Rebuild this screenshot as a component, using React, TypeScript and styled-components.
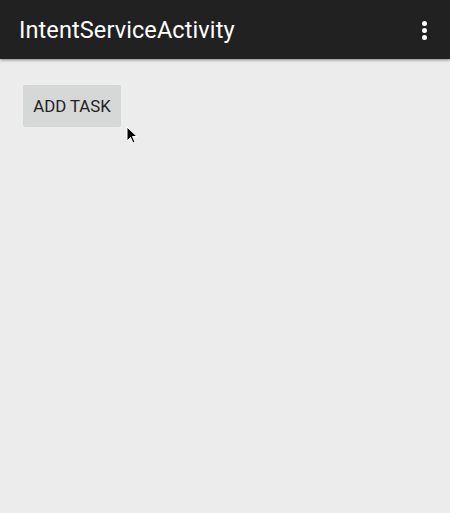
import React from "react";
import styled, { createGlobalStyle } from "styled-components";

const Global = createGlobalStyle`
  html, body {
    margin: 0;
    padding: 0;
    background: #ececec;
  }
  body {
    font-family: Roboto, "Liberation Sans", sans-serif;
  }
`;

const Screen = styled.div`
  position: relative;
  width: 450px;
  height: 513px;
  background: #ececec;
  overflow: hidden;
`;

const Toolbar = styled.div`
  display: flex;
  align-items: center;
  justify-content: space-between;
  height: 59px;
  padding: 0 23px 0 19px;
  background: #212121;
  box-shadow: 0 1px 3px rgba(0, 0, 0, 0.45);
  position: relative;
  z-index: 1;
`;

const Title = styled.h1`
  margin: 0;
  font-size: 23.5px;
  font-weight: 400;
  color: #ffffff;
  letter-spacing: 0.1px;
`;

const Overflow = styled.div`
  display: flex;
  flex-direction: column;
  gap: 2px;
  margin-top: 1px;
`;

const Dot = styled.span`
  width: 5px;
  height: 5px;
  border-radius: 50%;
  background: #ffffff;
`;

const Content = styled.div`
  padding: 26px 23px;
`;

const Button = styled.button`
  position: relative;
  height: 42px;
  width: 98px;
  padding: 0;
  border: none;
  border-radius: 2px;
  background: #d6d7d7;
  color: #222222;
  font-family: Roboto, "Liberation Sans", sans-serif;
  font-size: 16.8px;
  font-weight: 400;
  cursor: pointer;
`;

const Cursor = styled.svg`
  position: absolute;
  left: 126px;
  top: 126px;
`;

export default function App() {
  return (
    <Screen>
      <Global />
      <Toolbar>
        <Title>IntentServiceActivity</Title>
        <Overflow>
          <Dot />
          <Dot />
          <Dot />
        </Overflow>
      </Toolbar>
      <Content>
        <Button>ADD TASK</Button>
      </Content>
      <Cursor width="12" height="19" viewBox="0 0 12 19">
        <path d="M1 1 L1 15 L4.5 11.5 L7 17 L9 16 L6.5 10.5 L11 10.5 Z" fill="#000" stroke="#fff" strokeWidth="1" />
      </Cursor>
    </Screen>
  );
}
